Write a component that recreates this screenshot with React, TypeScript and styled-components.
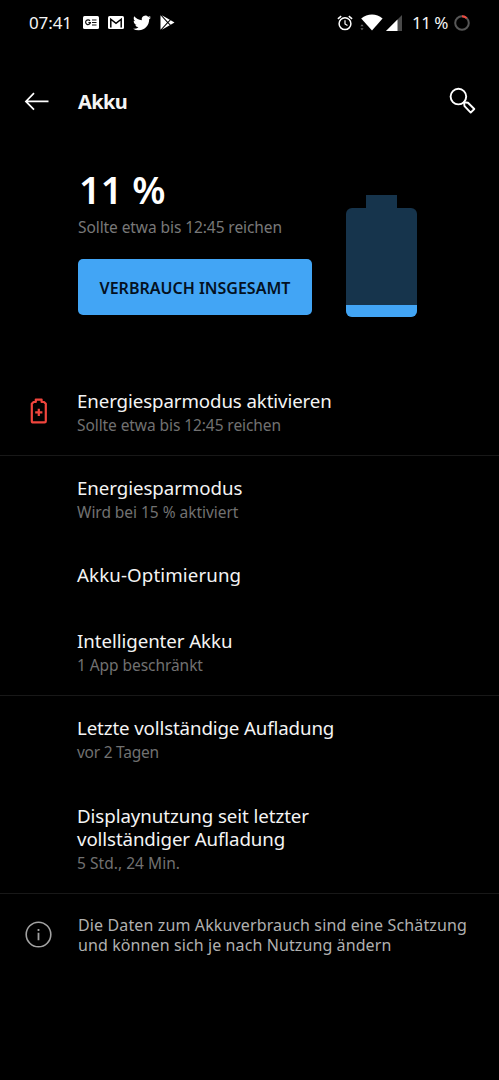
import React from "react";
import styled, { createGlobalStyle } from "styled-components";

const GlobalStyle = createGlobalStyle`
  * { box-sizing: border-box; }
  html, body { margin: 0; background: #000; }
  body { font-family: "Noto Sans", "Open Sans", sans-serif; color: #f4f4f4; }
`;

const Screen = styled.main`
  width: 499px;
  height: 1080px;
  background: #000;
  overflow: hidden;
  display: flex;
  flex-direction: column;
`;

const StatusBar = styled.header`
  height: 45px;
  flex: none;
  padding: 0 29px 0 29px;
  display: flex;
  align-items: center;
  justify-content: space-between;
  font-size: 17px;
  line-height: 24px;
`;

const StatusGroup = styled.div<{ $gap: number }>`
  display: flex;
  align-items: center;
  gap: ${(p) => p.$gap}px;
  svg { display: block; flex: none; }
`;

const BatteryStatus = styled.div`
  display: flex;
  align-items: center;
  gap: 6px;
  margin-left: 3px;
`;

const Text = styled.span<{ $ls?: number }>`
  letter-spacing: ${(p) => p.$ls ?? 0}px;
  white-space: nowrap;
`;

const AppBar = styled.nav`
  height: 112px;
  flex: none;
  padding: 0 22px 0 24px;
  display: grid;
  grid-template-columns: 54px 1fr 28px;
  align-items: center;
  svg { display: block; }
`;

const Heading = styled.h1`
  margin: 2px 0 0;
  font-size: 20px;
  line-height: 28px;
  font-weight: 700;
`;

const Summary = styled.section`
  height: 219px;
  flex: none;
  padding: 0 82px 0 77px;
  display: flex;
  justify-content: space-between;
`;

const Percent = styled.div`
  margin-top: 7px;
  height: 50px;
  padding-left: 2px;
  font-size: 38px;
  line-height: 50px;
  font-weight: 600;
  color: #fff;
`;

const Estimate = styled.div`
  margin-top: 2px;
  padding-left: 1px;
  font-size: 15.5px;
  line-height: 22px;
  color: #787878;
`;

const UsageButton = styled.button`
  margin: 21px 0 0 1px;
  width: 234px;
  height: 56px;
  padding: 2px 0 0;
  border: 0;
  border-radius: 5px;
  background: #42a5f5;
  color: #04111f;
  font: 600 16px/22px "Noto Sans", "Open Sans", sans-serif;
`;

const Battery = styled.div`
  width: 71px;
  padding-top: 38px;
  display: flex;
  flex-direction: column;
  align-items: center;
`;

const BatteryCap = styled.div`
  width: 31px;
  height: 13px;
  background: #16344c;
`;

const BatteryBody = styled.div`
  width: 71px;
  height: 109px;
  border-radius: 6px;
  overflow: hidden;
  background: #16344c;
  display: flex;
  align-items: flex-end;
`;

const BatteryLevel = styled.div`
  width: 100%;
  height: 12px;
  background: #42a5f5;
`;

const Group = styled.section<{ $height: number }>`
  height: ${(p) => p.$height}px;
  flex: none;
  border-bottom: 1px solid #181818;
`;

const Row = styled.div<{ $height: number; $top: number }>`
  height: ${(p) => p.$height}px;
  padding-top: ${(p) => p.$top}px;
  display: grid;
  grid-template-columns: 77px 1fr;
`;

const RowIcon = styled.div<{ $left: number; $top: number }>`
  padding: ${(p) => p.$top}px 0 0 ${(p) => p.$left}px;
  svg { display: block; }
`;

const Title = styled.div`
  font-size: 18.7px;
  line-height: 23px;
  color: #f4f4f4;
`;

const Subtitle = styled.div`
  margin-top: 1px;
  font-size: 15.5px;
  line-height: 25px;
  color: #717171;
`;

const Note = styled.p`
  margin: 0;
  padding-left: 1px;
  font-size: 16px;
  line-height: 20px;
  color: #b0b0b0;
`;

interface Line { text: string; ls: number }
interface ItemProps { height: number; top: number; title: Line[]; sub?: Line; icon?: React.ReactNode }

const Item = ({ height, top, title, sub, icon }: ItemProps) => (
  <Row $height={height} $top={top}>
    <div>{icon}</div>
    <div>
      {title.map((l) => <Title key={l.text}><Text $ls={l.ls}>{l.text}</Text></Title>)}
      {sub && <Subtitle><Text $ls={sub.ls}>{sub.text}</Text></Subtitle>}
    </div>
  </Row>
);

const NewsIcon = () => (
  <svg width="16" height="13" viewBox="0 0 16 13">
    <rect width="16" height="13" rx="1.5" fill="#fff" />
    <path d="M7 4.8A2.4 2.4 0 1 0 7.4 6.6H5.4M9 4h4.5M9 6.5h4.5M9 9h4.5" fill="none" stroke="#111" strokeWidth="1.2" />
  </svg>
);
const MailIcon = () => (
  <svg width="16" height="13" viewBox="0 0 16 13">
    <rect width="16" height="13" rx="1.5" fill="#fff" />
    <path d="M2.8 11.5V3.2L8 7.4l5.2-4.2v8.3" fill="none" stroke="#000" strokeWidth="1.5" />
  </svg>
);
const BirdIcon = () => (
  <svg width="18" height="18" viewBox="0 0 24 24">
    <path fill="#fff" d="M23.95 4.57a10 10 0 0 1-2.82.77 4.96 4.96 0 0 0 2.16-2.72c-.95.55-2 .95-3.13 1.18a4.92 4.92 0 0 0-8.38 4.48C7.69 8.1 4.07 6.13 1.64 3.16a4.82 4.82 0 0 0-.67 2.48c0 1.71.87 3.21 2.19 4.1a4.9 4.9 0 0 1-2.23-.62v.06a4.92 4.92 0 0 0 3.95 4.83 5 5 0 0 1-2.21.08 4.94 4.94 0 0 0 4.6 3.42A9.87 9.87 0 0 1 0 19.54a13.99 13.99 0 0 0 7.56 2.21c9.05 0 13.99-7.5 13.99-13.98 0-.21 0-.42-.02-.63a9.94 9.94 0 0 0 2.42-2.57z" />
  </svg>
);
const PlayIcon = () => (
  <svg width="15" height="15" viewBox="0 0 15 15">
    <path fill="#fff" d="M.5.3v14.4L7 7.5zM1.8.3l6 6.4L9.8 4.8zM1.8 14.7l6-6.4 2 1.9zM10.7 5.3 8.5 7.5l2.2 2.2L14.5 7.5z" />
  </svg>
);
const AlarmIcon = () => (
  <svg width="16" height="16" viewBox="0 0 16 16" fill="none" stroke="#fff">
    <circle cx="8" cy="8.7" r="5.9" strokeWidth="1.5" />
    <path d="M8 5.2V9l2.5 1.5" strokeWidth="1.2" />
    <path d="M.9 3.9 4.2 1.1M15.1 3.9 11.8 1.1" strokeWidth="1.5" />
  </svg>
);
const WifiIcon = () => (
  <svg width="23" height="17" viewBox="0 0 23 17">
    <path d="M12 16.5 1.2 4.4C7.5-.8 16.5-.8 22.6 4.4z" fill="#fff" />
    <path d="M.4 12.2 2 10.2l1.6 2zM.4 14.2 2 16.2l1.6-2z" fill="#666" />
  </svg>
);
const SignalIcon = () => (
  <svg width="16" height="16" viewBox="0 0 16 16">
    <path d="M16 0v16H0z" fill="#4a4a4a" />
    <path d="M11.5 4.5V16H0z" fill="#fff" />
  </svg>
);
const BatteryRing = () => (
  <svg width="16" height="16" viewBox="0 0 16 16" fill="none" strokeWidth="2">
    <circle cx="8" cy="8" r="6.8" stroke="#575757" />
    <path d="M8 1.2A6.8 6.8 0 0 1 12.7 3.1" stroke="#f0483e" />
  </svg>
);
const BackIcon = () => (
  <svg width="26" height="20" viewBox="0 0 26 20" fill="none" stroke="#fff" strokeWidth="1.7">
    <path d="M24.5 10.4H2M10 2.2 1.9 10.4l8.1 8.2" />
  </svg>
);
const SearchIcon = () => (
  <svg width="28" height="28" viewBox="0 0 28 28" fill="none" stroke="#fff" strokeWidth="1.9">
    <circle cx="9.4" cy="9.6" r="7.8" />
    <path d="m15 15.2.5 4 6.2 6.4 3.6-3.6-6.3-6.2z" strokeLinejoin="round" />
  </svg>
);
const SaverIcon = () => (
  <svg width="18" height="27" viewBox="0 0 18 27" fill="none" stroke="#f0453d" strokeWidth="2.2">
    <path d="M5.8 4V1.6h5.8V4h2.4L15.8 5.8v17.4q0 1.2-1.2 1.2H3q-1.2 0-1.2-1.2V5.8L3.6 4z" strokeLinejoin="round" />
    <path d="M8.8 10.8v7.2M5.2 14.4h7.2" />
  </svg>
);
const InfoIcon = () => (
  <svg width="27" height="27" viewBox="0 0 27 27" fill="none" stroke="#a2a2a2">
    <circle cx="13.5" cy="13.5" r="12.3" strokeWidth="1.6" />
    <path d="M13.5 11.8v7.5M13.5 8v2" strokeWidth="1.8" />
  </svg>
);

export default function App() {
  return (
    <Screen>
      <GlobalStyle />
      <StatusBar>
        <StatusGroup $gap={11}>
          <Text $ls={-0.1}>07:41</Text>
          <StatusGroup $gap={9}><NewsIcon /><MailIcon /><BirdIcon /><PlayIcon /></StatusGroup>
        </StatusGroup>
        <StatusGroup $gap={7}>
          <AlarmIcon />
          <StatusGroup $gap={3}><WifiIcon /><SignalIcon /></StatusGroup>
          <BatteryStatus><Text $ls={-0.5}>11 %</Text><BatteryRing /></BatteryStatus>
        </StatusGroup>
      </StatusBar>
      <AppBar>
        <BackIcon />
        <Heading><Text $ls={-0.6}>Akku</Text></Heading>
        <SearchIcon />
      </AppBar>
      <Summary>
        <div>
          <Percent><Text>11 %</Text></Percent>
          <Estimate><Text $ls={-0.08}>Sollte etwa bis 12:45 reichen</Text></Estimate>
          <UsageButton><Text>VERBRAUCH INSGESAMT</Text></UsageButton>
        </div>
        <Battery>
          <BatteryCap />
          <BatteryBody><BatteryLevel /></BatteryBody>
        </Battery>
      </Summary>
      <Group $height={80}>
        <Item height={79} top={13} title={[{ text: "Energiesparmodus aktivieren", ls: -0.1 }]} sub={{ text: "Sollte etwa bis 12:45 reichen", ls: -0.08 }}
          icon={<RowIcon $left={30} $top={9}><SaverIcon /></RowIcon>} />
      </Group>
      <Group $height={240}>
        <Item height={87} top={20} title={[{ text: "Energiesparmodus", ls: -0.06 }]} sub={{ text: "Wird bei 15 % aktiviert", ls: -0.04 }} />
        <Item height={66} top={20} title={[{ text: "Akku-Optimierung", ls: 0.12 }]} />
        <Item height={86} top={20} title={[{ text: "Intelligenter Akku", ls: -0.06 }]} sub={{ text: "1 App beschränkt", ls: -0.06 }} />
      </Group>
      <Group $height={198}>
        <Item height={88} top={20} title={[{ text: "Letzte vollständige Aufladung", ls: -0.12 }]} sub={{ text: "vor 2 Tagen", ls: -0.25 }} />
        <Item height={109} top={20} title={[{ text: "Displaynutzung seit letzter", ls: -0.06 }, { text: "vollständiger Aufladung", ls: -0.1 }]} sub={{ text: "5 Std., 24 Min.", ls: 0.04 }} />
      </Group>
      <Row $height={80} $top={21}>
        <RowIcon $left={25} $top={6}><InfoIcon /></RowIcon>
        <Note>
          <Text $ls={0.13}>Die Daten zum Akkuverbrauch sind eine Schätzung</Text><br />
          <Text $ls={0.1}>und können sich je nach Nutzung ändern</Text>
        </Note>
      </Row>
    </Screen>
  );
}
